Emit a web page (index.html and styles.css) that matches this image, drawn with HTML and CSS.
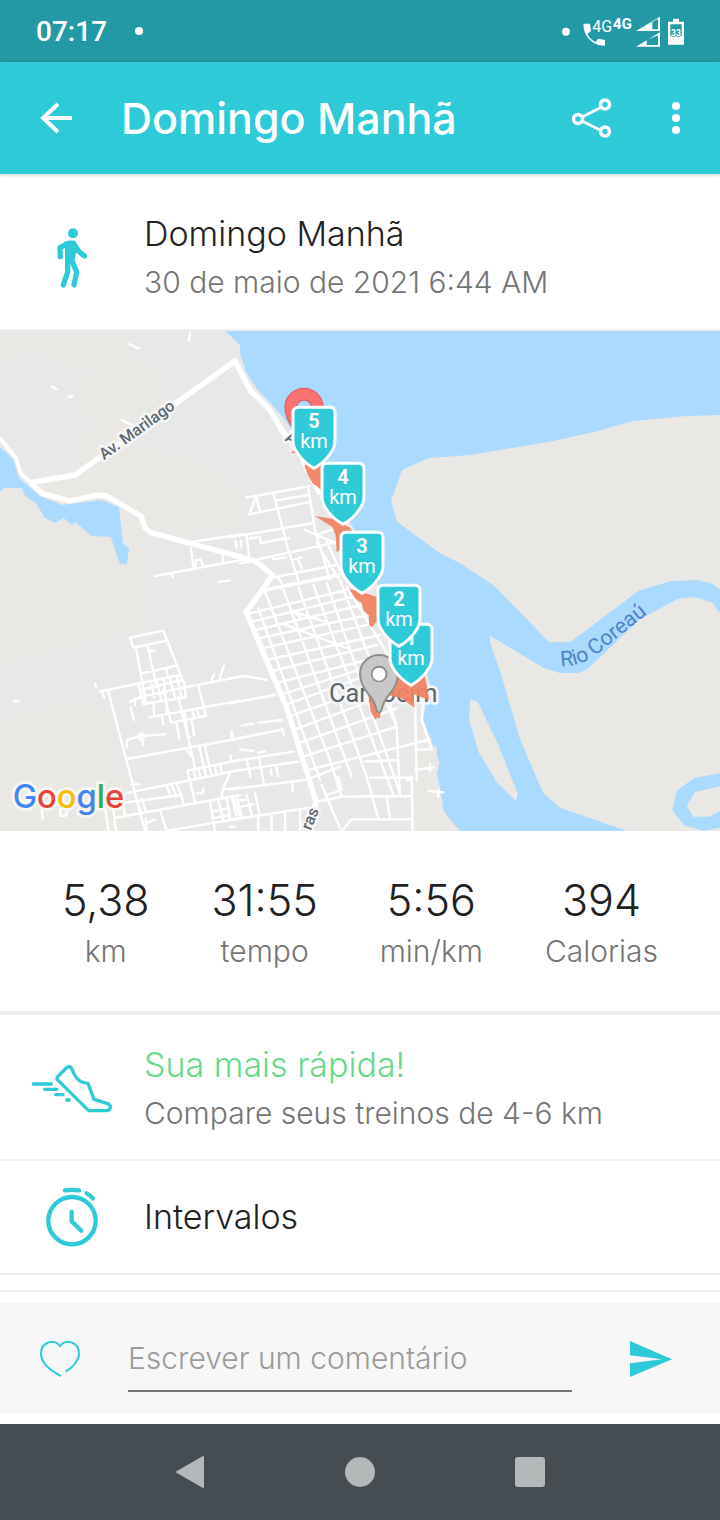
FILE: index.html
```
<!DOCTYPE html>
<html lang="pt-BR">
<head>
  <meta charset="UTF-8">
  <meta name="viewport" content="width=device-width, initial-scale=1">
  <title>Domingo Manhã</title>
  <link rel="stylesheet" href="styles.css">
</head>
<body>
  <div class="status-bar">
    <span class="clock">07:17</span>
    <span class="dot"></span>
    <svg class="status-icons" viewBox="60 40 372 105" fill="#fff">
      <circle cx="78" cy="93" r="12"/>
      <path d="M130 69h20l3 22-11 9q9 17 24 24l9-10 20 4v17q-18 1-35-9-30-20-30-57z"/>
      <text x="157" y="94" font-size="48" font-weight="400">4G</text>
      <text x="218" y="86" font-size="46" font-weight="700">4G</text>
      <path fill-rule="evenodd" d="M288 91l72-43v43zM337 64v22h17V54zM288 138l72-43v43zM320 118v15h34v-29z"/>
      <path fill-rule="evenodd" d="M399 54h18v9h15v69h-48V63h15zM391 71v34h34V71z"/>
      <text class="battery-level" x="408" y="107">33</text>
    </svg>
  </div>

  <header class="app-bar">
    <button class="icon-btn" aria-label="Voltar">
      <svg width="32" height="32" viewBox="0 0 32 32" fill="none" stroke="#fff" stroke-width="4"><path d="M18 2L3 16l15 14M2 16h30"/></svg>
    </button>
    <h1>Domingo Manhã</h1>
    <button class="icon-btn" aria-label="Compartilhar">
      <svg width="40" height="40" viewBox="0 0 80 80" fill="none" stroke="#fff"><path stroke-width="6" d="M20 38l36-18M20 46l36 18"/><g stroke-width="7"><circle cx="12" cy="42" r="9"/><circle cx="66" cy="13" r="9"/><circle cx="66" cy="67" r="9"/></g></svg>
    </button>
    <button class="icon-btn menu-btn" aria-label="Mais opções">
      <svg width="8" height="32" viewBox="0 0 8 32" fill="#fff"><circle cx="4" cy="4" r="4"/><circle cx="4" cy="16" r="4"/><circle cx="4" cy="28" r="4"/></svg>
    </button>
  </header>

  <main>
    <section class="row summary">
      <div class="row-icon">
        <svg width="30" height="60" viewBox="0 0 90 180" fill="none" stroke="#2ecad8" stroke-width="16" stroke-linecap="round" stroke-linejoin="round">
          <circle cx="48" cy="16" r="15" fill="#2ecad8" stroke="none"/>
          <path d="M36 46L9 58l1 28M50 46l14 23 18 15M32 92v40l-13 39M42 92l17 40-8 39"/>
          <path fill="#2ecad8" stroke="none" d="M20 42q22-9 34-1l6 22-8 36-28 3v-40z"/>
        </svg>
      </div>
      <div>
        <h2>Domingo Manhã</h2>
        <p>30 de maio de 2021 6:44 AM</p>
      </div>
    </section>

    <svg class="map" viewBox="0 0 2160 1500" role="img" aria-label="Mapa do percurso em Camocim">
      <rect width="2160" height="1500" fill="#aadaff"/>
      <!-- west bank -->
      <path fill="#e8e8e8" d="M0 0H675L720 42V66L738 123 771 174 804 207 855 267 930 380 1010 500 1060 590 1100 700 1180 850 1260 960 1290 1060 1280 1110 1270 1165 1318 1295 1310 1330 1323 1380 1330 1440 1362 1485 1380 1500H0z"/>
      <g fill="#e9e8e4">
        <path d="M0 0H420L340 80 260 110 170 95 110 55 0 110z"/>
        <circle cx="367" cy="197" r="127"/>
        <path d="M250 290L400 330 560 380 690 450 725 510 700 590 560 610 420 600 460 820 440 880 390 910 150 965 0 997V460L120 480 230 420z"/>
        <path d="M0 1167L230 1112q60-5 85 30l50 180 30 178H0z"/>
        <path d="M1245 1255l65-10v85l20 110 50 60H1235z"/>
      </g>
      <path fill="#aadaff" d="M0 348L39 384 57 441 120 495 186 522 303 507 357 528 369 640 387 652 381 700 360 699 332 618 273 614 225 572 216 582 190 560 165 576 135 561 108 516 75 495 66 472 15 470 0 480z"/>
      <!-- east bank, delta and sandbank -->
      <g fill="#e9e8e4">
        <path d="M2160 252L2050 256 1900 270 1785 302 1656 331 1410 372 1284 382 1206 417 1173 510 1191 572 1320 667 1380 697 1485 766 1647 934 1713 932 1915 780 2010 751 2094 747 2140 760 2160 775z"/>
        <path d="M1468 913L1630 1010 1680 1026 1735 1026 1762 1015 1920 864 2035 803 2088 799 2137 815 2160 846V1500H1881L1680 1430 1630 1387 1560 1225 1505 1036 1472 940z"/>
        <path d="M1411 1104l22 8 60 125 60 150-4 24-57-55-56-92-29-100z"/>
      </g>
      <path fill="#aadaff" fill-rule="evenodd" d="M2160 1327L2082 1341 2030 1379 2017 1437 2052 1483 2110 1499 2160 1490V1440L2128 1457H2080L2060 1424 2085 1383 2160 1366z"/>

      <g fill="none" stroke="#fff" stroke-width="7" stroke-linecap="round" stroke-linejoin="round">
        <!-- north-west -->
        <path transform="translate(0 -3)" d="M465 738L745 686M572 636L735 612M573 655L580 712M585 710L588 690 603 690 608 705M668 675V695M708 635L710 655M385 42L418 55M570 8L567 32M155 170L170 178M205 201L218 198M365 270L402 288M515 728L518 742"/>
        <!-- streets by the shore -->
        <path transform="translate(690 -3)" d="M48 503L240 468M78 500L58 553L245 515M78 500L90 545M130 490L175 660 205 750M235 475L255 600 300 750M135 512L235 495M0 622L247 580M50 615L57 680M60 625L90 620 92 640 160 625M140 630L178 625M30 700L305 640M125 678L130 688 168 682M115 745L320 705M145 740L155 760M255 615L320 595M260 640L325 745M290 635L330 720M188 690L215 682M205 690L215 715M16 635L20 650M32 632L34 650M225 600L320 640"/>
        <!-- west district -->
        <path transform="translate(0 747)" d="M390 173L490 152 555 318M390 173L400 203 500 182M408 203L438 370M443 198L470 320M450 213H465M427 280L530 257M300 334L540 285M415 310L430 372 558 352 553 318M420 330L545 300M425 350L555 322 720 290M390 365L425 350M448 412L720 362M460 370L463 408M595 318L618 408 513 428 490 330M455 312L462 352M472 306L484 362M492 300L502 400M510 296L525 352M530 288L545 350M498 265L503 290M325 335L435 753M380 537L720 475M380 502L382 480 412 470 497 462M412 470L424 460 434 470 426 482 412 470M428 482V495M535 350L580 540 585 570M555 505L580 535M375 640L720 570M375 668L545 645M345 714L720 645M562 572L720 540M562 572L585 665M500 618L512 648M515 616L527 645M530 612L542 642L552 675M690 578L668 630 665 648M670 628L720 622M590 640L608 640 611 625M480 690L500 753M440 753L437 715M440 730L465 718M630 665L645 753M655 660L670 720M680 655L690 715M700 650L718 705M635 695L680 685M635 715L690 705M580 570L588 597M595 567L602 594M612 563L619 590M628 560L635 587M643 556L650 583M660 553L665 578M315 680L325 753M340 690L348 753M370 660L375 705M395 613H417M410 660L425 700M425 655L438 695M125 685L128 718M180 685L182 708 200 706V690M500 753L720 715M672 257L658 298M642 283L635 300M42 364H56M285 312L289 322M305 335L313 353M392 382L401 420M405 355V375M485 405L490 433M530 430L538 475M555 400L563 470 570 470M575 420L582 465M577 390L581 408M592 386L596 405M598 500L612 563M615 497L628 558M695 455L697 475M692 527V542M655 5L690 2"/>
        <!-- town grid -->
        <path transform="translate(690 747)" d="M85 85L270 600M105 35L300 540 335 650M160 28L365 590M205 22L410 590 445 715M250 15L490 645M290 8L510 640M330 0L470 370 500 440 510 645M350 20L495 260M60 100L350 30M65 125L370 50M75 150L395 75M85 175L415 105M95 205L430 130M110 240L450 165M120 275L440 195M135 310L410 240M150 345L400 265M165 375L400 290M175 410L420 325M190 450L430 360M205 490L500 385M220 530L500 440M235 570L600 478M240 595L330 560M260 665L340 650 545 648M335 753L365 718 548 718M420 593H548M545 590L548 753M555 350L560 600M580 350L575 420 605 508H560M555 570L612 562M600 552V572M595 633L640 637M625 630V650M405 545L505 540M155 130L365 210M190 95L285 125M190 95L210 110M275 615L330 745M325 590L335 630 290 645M470 650L480 715M530 600H545M0 295L45 288 110 300M0 370L135 345M35 437L70 430M85 428L155 420M0 480L160 448M155 445L162 465M5 455V470M30 508L70 513M85 518L105 515M0 545L190 515M0 575L205 545M0 628L225 600M50 540L62 590M88 535L103 620M122 570L125 585M138 555L145 590M188 610V635M0 720L258 680M5 650L20 708M20 650L35 710M50 645L65 705M75 640L88 700M125 705V753M165 697V753M210 690V753M85 710V753M35 680L70 672M30 660H45M500 440L480 370M0 740H15"/>
      </g>
      <!-- main roads -->
      <g fill="none" stroke="#fff" stroke-linejoin="round">
        <path stroke-width="11" d="M0 322L48 381 62 426 95 457M780 780L1040 727"/>
        <path stroke-width="16" d="M91 455L225 432 705 90 750 177 810 237 845 297 900 370 960 490M91 455L126 487 210 510 290 492 320 495 423 555 435 590 450 604 730 680 765 690 818 732 785 780 738 843 860 1130 948 1412 940 1450"/>
      </g>

      <g class="map-label">
        <text class="street" transform="translate(312 388) rotate(-36)">Av. Marilago</text>
        <text class="street" transform="translate(853 328) rotate(28)">A</text>
        <text class="street" transform="translate(932 1500) rotate(-68)">ras</text>
        <text class="city" x="987" y="1112">Camocim</text>
      </g>
      <path id="river" fill="none" d="M1682 1005Q1755 1008 1820 945L2010 795"/>
      <text class="water"><textPath href="#river">Rio Coreaú</textPath></text>

      <!-- start and finish pins -->
      <path fill="#fb7272" fill-rule="evenodd" stroke="#e06068" stroke-width="4" d="M912 172a57 57 0 0 1 57 57q0 30-25 65l-32 60-32-60q-25-35-25-65a57 57 0 0 1 57-57zM912 207a22 22 0 1 0 1 0z"/>
      <!-- run trace -->
      <path fill="#ef8364" fill-opacity=".94" d="M872 365l10-6 10 8zM913 402l50 0 15 30-15 45-12-12-12-6-16-28zM945 555l60 10 45 25 10 15-35 50-15 8-3-50-10-25zM1048 774l40 10 60 20v50l-20 20-12 14-8-5-2-30-14-14-8-24-18-12zM1105 1090l20-30 60-30 30-35 50 5 15 60 8 48-50-20 6 42-40-28-40-10-20 30-4 40-10-2-4 6-14-24z"/>
      <path fill="#c8c8c8" fill-rule="evenodd" stroke="#8e9088" stroke-width="6" d="M1137 972a57 57 0 0 1 57 57q0 30-25 60-18 20-24 46-3 10-8 10t-8-10q-6-26-24-46-25-30-25-60a57 57 0 0 1 57-57zM1137 1007a22 22 0 1 0 1 0z"/>
      <circle cx="1137" cy="1030" r="19" fill="#fff"/>

      <defs>
        <path id="shield" fill="#2ecad8" stroke="#fff" stroke-width="9" stroke-linejoin="round" d="M-47 4H47Q63 4 63 20V103Q63 125 48 144 30 170 0 187-30 170-48 144-63 125-63 103V20Q-63 4-47 4Z"/>
      </defs>
      <g class="km-mark">
        <g transform="translate(1233 876)"><use href="#shield"/><text class="num" y="67">1</text><text y="126">km</text></g>
        <g transform="translate(1197 759)"><use href="#shield"/><text class="num" y="67">2</text><text y="126">km</text></g>
        <g transform="translate(1086 600)"><use href="#shield"/><text class="num" y="67">3</text><text y="126">km</text></g>
        <g transform="translate(1029 393)"><use href="#shield"/><text class="num" y="67">4</text><text y="126">km</text></g>
        <g transform="translate(942 225)"><use href="#shield"/><text class="num" y="67">5</text><text y="126">km</text></g>
      </g>
      <text class="google" x="38" y="1432"><tspan fill="#4285f4">G</tspan><tspan fill="#ea4335">o</tspan><tspan fill="#fbbc05">o</tspan><tspan fill="#4285f4">g</tspan><tspan fill="#34a853">l</tspan><tspan fill="#ea4335">e</tspan></text>
    </svg>

    <section class="stats">
      <div class="stat"><strong>5,38</strong><span>km</span></div>
      <div class="stat"><strong>31:55</strong><span>tempo</span></div>
      <div class="stat"><strong>5:56</strong><span>min/km</span></div>
      <div class="stat"><strong>394</strong><span>Calorias</span></div>
    </section>

    <a class="row compare" href="#comparar">
      <div class="row-icon">
        <svg width="80" height="48" viewBox="0 0 240 144" fill="none" stroke="#2ecad8" stroke-width="10" stroke-linecap="round" stroke-linejoin="round">
          <path d="M106 6Q117 3 120 13 132 48 156 53L168 55 186 103 225 115Q236 119 235 128 233 137 223 137H170L76 44Q73 40 77 35Z"/>
          <path d="M4 57H58M38 73H75M71 89H93M104 105H112"/>
        </svg>
      </div>
      <div>
        <h2 class="fastest">Sua mais rápida!</h2>
        <p>Compare seus treinos de 4-6 km</p>
      </div>
    </a>

    <a class="row intervals" href="#intervalos">
      <div class="row-icon">
        <svg width="52" height="60" viewBox="0 0 156 180" fill="none" stroke="#2ecad8" stroke-width="13" stroke-linecap="round" stroke-linejoin="round">
          <circle cx="78" cy="101" r="71"/>
          <path d="M77 75V103L106 131M57 10Q78 7 99 10M122 19Q132 24 141 34"/>
        </svg>
      </div>
      <h2>Intervalos</h2>
    </a>
  </main>

  <form class="comment-bar">
    <button type="button" class="icon-btn" aria-label="Curtir">
      <svg width="40" height="36" viewBox="0 0 120 108" fill="none" stroke="#2ecad8" stroke-width="6"><path d="M63 105C25 86 3 61 3 37 3 4 42-9 60 15 78-9 117 4 117 37 117 59 97 80 77 92"/></svg>
    </button>
    <input type="text" placeholder="Escrever um comentário" aria-label="Escrever um comentário">
    <button class="icon-btn" aria-label="Enviar">
      <svg width="42" height="36" viewBox="0 0 125 107" fill="#2ecad8"><path d="M0 0L125 54 0 107V66L95 54 0 42z"/></svg>
    </button>
  </form>

  <nav class="nav-bar">
    <button class="icon-btn" aria-label="Voltar à tela anterior"><svg width="30" height="32" viewBox="0 0 30 32"><path fill="#b3b8b8" stroke="#b3b8b8" stroke-width="2" stroke-linejoin="round" d="M28 1V31L2 16z"/></svg></button>
    <button class="icon-btn" aria-label="Início"><svg width="30" height="30" viewBox="0 0 30 30"><circle cx="15" cy="15" r="15" fill="#b3b8b8"/></svg></button>
    <button class="icon-btn" aria-label="Recentes"><svg width="30" height="30" viewBox="0 0 30 30"><rect width="30" height="30" rx="3" fill="#b3b8b8"/></svg></button>
  </nav>
</body>
</html>
```
FILE: styles.css
```
* {
  box-sizing: border-box;
}

body {
  margin: 0;
  font-family: Inter, sans-serif;
  font-weight: 300;
  color: #212121;
  background: #fff;
}

h1, h2, p {
  margin: 0;
}

svg {
  display: block;
}

.icon-btn {
  padding: 0;
  border: none;
  background: none;
  cursor: pointer;
}

.status-bar {
  display: flex;
  align-items: center;
  gap: 28px;
  height: 62px;
  padding: 0 36px;
  background: #2499a6;
  color: #fff;
  font-family: Roboto, sans-serif;
}

.clock {
  font-size: 28px;
  font-weight: 500;
}

.dot {
  width: 8px;
  height: 8px;
  border-radius: 50%;
  background: #fff;
}

.status-icons {
  width: 124px;
  height: 35px;
  margin-left: auto;
}

.battery-level {
  font-size: 26px;
  font-weight: 700;
  text-anchor: middle;
  stroke: #2499a6;
  stroke-width: 5px;
  paint-order: stroke;
}

.app-bar {
  position: relative;
  display: flex;
  align-items: center;
  height: 112px;
  padding: 0 40px;
  background: #2ecad8;
  color: #fff;
  box-shadow: 0 1px 4px rgba(0, 0, 0, 0.2);
}

.app-bar h1 {
  flex: 1;
  margin-left: 49px;
  font-size: 43px;
  font-weight: 500;
}

.menu-btn {
  margin-left: 60px;
}

.row {
  display: flex;
  align-items: center;
  border-bottom: 2px solid #ededed;
  color: inherit;
  text-decoration: none;
}

.row-icon {
  display: flex;
  justify-content: center;
  flex: 0 0 144px;
}

.row h2 {
  font-size: 34px;
  font-weight: 300;
  line-height: 48px;
}

.row p {
  font-size: 30px;
  line-height: 48px;
  color: #757575;
}

.row .fastest {
  color: #67d88c;
}

.summary {
  min-height: 157px;
  padding-top: 12px;
}

.compare {
  min-height: 146px;
  padding-top: 4px;
}

.intervals {
  min-height: 114px;
}

.map {
  width: 100%;
  height: auto;
  font-family: Roboto, sans-serif;
  font-weight: 400;
}

.map-label {
  fill: #5b6873;
  stroke: #f5f5f5;
  stroke-width: 16px;
  stroke-linejoin: round;
  paint-order: stroke;
}

.street {
  font-size: 48px;
  font-weight: 500;
}

.city {
  font-size: 76px;
}

.water {
  font-size: 64px;
  fill: #4f82c6;
}

.km-mark {
  fill: #fff;
  font-size: 60px;
  text-anchor: middle;
}

.num {
  font-weight: 700;
}

.google {
  font-family: Inter, sans-serif;
  font-size: 98px;
  font-weight: 500;
  stroke: #f5f5f3;
  stroke-width: 18px;
  stroke-linejoin: round;
  paint-order: stroke;
}

.stats {
  display: flex;
  justify-content: space-evenly;
  padding: 42px 0 36px;
  border-bottom: 4px solid #ededed;
}

.stat {
  text-align: center;
}

.stat strong {
  display: block;
  font-size: 43px;
  font-weight: 300;
  line-height: 54px;
}

.stat span {
  display: block;
  font-size: 30px;
  line-height: 48px;
  color: #757575;
}

.comment-bar {
  display: flex;
  align-items: center;
  margin: 28px 0 11px;
  padding: 23px 48px 21px 40px;
  background: #f7f7f7;
  box-shadow: 0 -11px #fff, 0 -13px #ededed;
}

.comment-bar input {
  flex: 1;
  min-width: 0;
  height: 66px;
  margin: 0 58px 0 48px;
  padding: 0;
  border: none;
  border-bottom: 2px solid #757575;
  background: none;
  font: inherit;
  font-size: 30px;
  color: #212121;
}

.comment-bar input::placeholder {
  color: #9b9b9b;
}

.nav-bar {
  display: flex;
  align-items: center;
  justify-content: center;
  gap: 140px;
  height: 96px;
  background: #454d53;
}
```
